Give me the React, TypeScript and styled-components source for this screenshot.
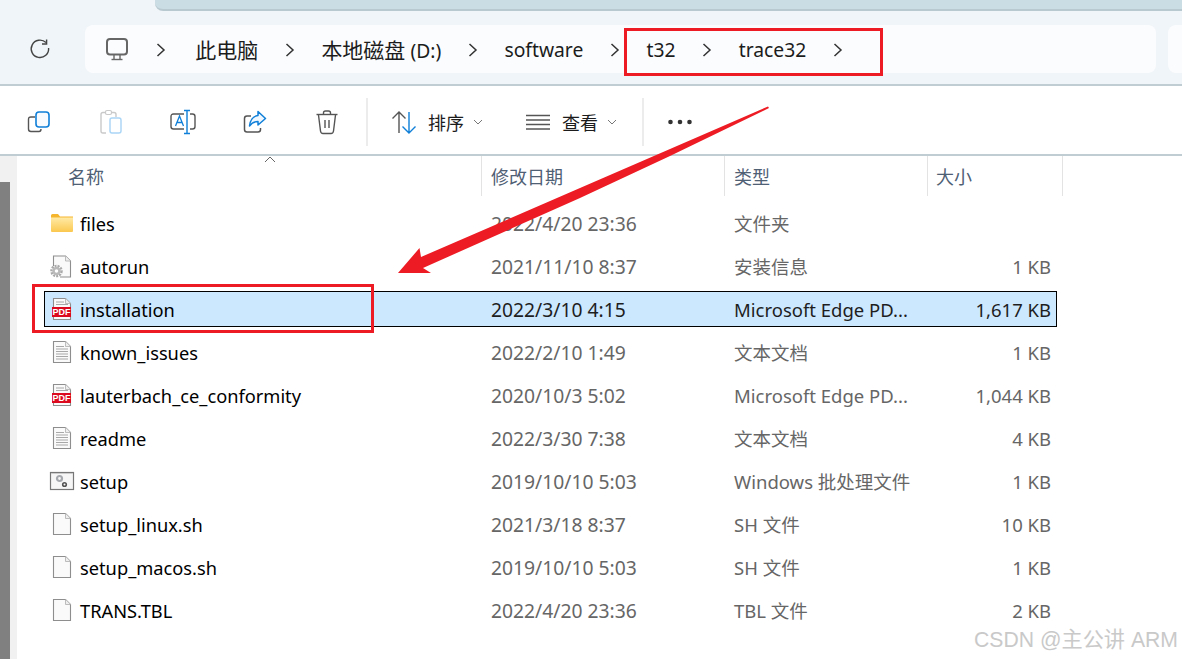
import * as React from 'react';
import styled, { createGlobalStyle } from 'styled-components';

const GlobalStyle = createGlobalStyle`
  html, body {
    margin: 0;
    padding: 0;
    background: #fff;
  }
  body {
    font-family: 'Noto Sans', 'Noto Sans CJK SC', sans-serif;
    overflow: hidden;
  }
`;

const Page = styled.div`
  position: relative;
  width: 1182px;
  height: 659px;
  overflow: hidden;
  display: flex;
  flex-direction: column;
  background: #fff;
`;

const TabStrip = styled.div`
  height: 11px;
  flex: none;
  padding-left: 155px;
  background: #eff5f8;
`;

const ActiveTab = styled.div`
  height: 9px;
  background: #cbdde4;
  border-bottom: 2px solid #b9c9d0;
  border-bottom-left-radius: 8px;
`;

const AddressRow = styled.div`
  height: 75px;
  flex: none;
  box-sizing: border-box;
  display: flex;
  align-items: flex-start;
  padding-top: 14px;
  background: #eff5f8;
  border-bottom: 2px solid #c0ced4;
`;

const RefreshSlot = styled.div`
  width: 85px;
  height: 48px;
  flex: none;
  display: flex;
  align-items: center;
  justify-content: center;
  padding-right: 5px;
  box-sizing: border-box;
`;

const AddressBar = styled.div`
  width: 1071px;
  height: 48px;
  flex: none;
  box-sizing: border-box;
  display: flex;
  align-items: center;
  gap: 25.6px;
  padding-left: 20px;
  background: #fbfcfe;
  border-radius: 8px;
`;

const SearchBox = styled.div`
  width: 40px;
  height: 48px;
  flex: none;
  margin-left: 12px;
  background: #fbfcfe;
  border-radius: 8px 0 0 8px;
`;

const Crumb = styled.span`
  font-size: 19.3px;
  color: #1c1c1c;
  white-space: nowrap;
  line-height: 26px;
  margin-top: 2px;
`;

const CrumbCjk = styled.span`
  font-family: 'Noto Sans CJK SC', sans-serif;
  font-size: 21px;
`;

const ChevronSvg = styled.svg<{ $after?: number }>`
  flex: none;
  margin-top: 2px;
  margin-right: ${(p) => p.$after ?? 0}px;
`;

const Toolbar = styled.div`
  height: 70px;
  flex: none;
  box-sizing: border-box;
  display: flex;
  align-items: center;
  padding: 4px 0 0 3px;
  border-bottom: 2px solid #c0ced4;
`;

const ToolButton = styled.div`
  width: 72px;
  height: 48px;
  flex: none;
  display: flex;
  align-items: center;
  justify-content: center;
`;

const ToolDivider = styled.div`
  width: 2px;
  height: 48px;
  flex: none;
  margin: 0 23px 0 3px;
  background: #ececec;
`;

const MenuButton = styled.div<{ $width: number }>`
  width: ${(p) => p.$width}px;
  height: 48px;
  flex: none;
  display: flex;
  align-items: center;
`;

const MenuLabel = styled.span`
  margin: 0 9px 0 11px;
  font-size: 18px;
  color: #1c1c1c;
  font-family: 'Noto Sans CJK SC', sans-serif;
`;

const Body = styled.div`
  flex: 1;
  display: flex;
  min-height: 0;
`;

const ScrollTrack = styled.div`
  width: 17px;
  flex: none;
  background: #f1f1f1;
  margin-right: 3px;
`;

const ScrollThumb = styled.div`
  width: 10px;
  height: 100%;
  margin-top: 26px;
  background: #808080;
`;

const List = styled.div`
  flex: 1;
  min-width: 0;
`;

const HeaderRow = styled.div`
  height: 40px;
  display: grid;
  grid-template-columns: 462px 243px 203px 135px;
`;

const HeaderCell = styled.div<{ $pad: number }>`
  position: relative;
  box-sizing: border-box;
  padding-left: ${(p) => p.$pad}px;
  display: flex;
  align-items: center;
  font-family: 'Noto Sans CJK SC', sans-serif;
  font-size: 18px;
  color: #4f6075;
  border-right: 1.5px solid #e3e3e3;
`;

const SortCaret = styled.svg`
  position: absolute;
  left: 244px;
  top: 0;
`;

const Rows = styled.div`
  display: flex;
  flex-direction: column;
  gap: 7px;
  margin-left: 24px;
  padding-top: 9px;
  width: 1013px;
`;

const Row = styled.div<{ $selected?: boolean }>`
  height: 36px;
  box-sizing: border-box;
  display: grid;
  grid-template-columns: 35px 411px 243px 1fr auto;
  align-items: center;
  padding-right: 5px;
  border: 1px solid ${(p) => (p.$selected ? '#000' : 'transparent')};
  background: ${(p) => (p.$selected ? '#cce8ff' : 'transparent')};
`;

const IconSlot = styled.div`
  display: flex;
  align-items: center;
  justify-content: center;
  padding-right: 2px;
  box-sizing: border-box;
`;

const NameCell = styled.span`
  font-size: 18.25px;
  color: #000;
  white-space: nowrap;
`;

const DetailCell = styled.span<{ $selected?: boolean; $right?: boolean }>`
  font-size: 18.5px;
  color: ${(p) => (p.$selected ? '#1e1e1e' : '#666')};
  white-space: nowrap;
  text-align: ${(p) => (p.$right ? 'right' : 'left')};
`;

const DateCell = styled(DetailCell)`
  font-size: 19.3px;
`;

const Annotations = styled.svg`
  position: absolute;
  left: 0;
  top: 0;
  pointer-events: none;
`;

const Watermark = styled.div`
  position: absolute;
  right: 4px;
  bottom: 6px;
  font-family: 'Liberation Sans', 'Noto Sans CJK SC', sans-serif;
  font-size: 21.2px;
  color: #c9c9c9;
  white-space: nowrap;
`;

const Chevron = ({ after }: { after?: number }) => (
  <ChevronSvg $after={after} width="12" height="16" viewBox="0 0 12 16" fill="none">
    <path d="M2.500 2 L9 8 L2.500 14" stroke="#333" strokeWidth="1.500" />
  </ChevronSvg>
);

const SmallChevron = () => (
  <svg width="10" height="6" viewBox="0 0 10 6" fill="none">
    <path d="M1 1 L5 5 L9 1" stroke="#777" strokeWidth="1" />
  </svg>
);

const RefreshIcon = () => (
  <svg width="22" height="22" viewBox="0 0 22 22" fill="none" stroke="#444" strokeWidth="1.400">
    <path d="M17 4.600 A8.700 8.700 0 1 0 19.600 10" />
    <path d="M17.600 1.600 V6 H13" />
  </svg>
);

const ComputerIcon = () => (
  <svg width="24" height="24" viewBox="0 0 24 24" fill="none" stroke="#666" strokeWidth="2">
    <rect x="2" y="2" width="20" height="15.500" rx="3" />
    <path d="M9 18 V22 M15 18 V22" strokeWidth="1.400" />
    <path d="M6.500 22.500 H17.500" strokeWidth="1.400" />
  </svg>
);

const CopyIcon = () => (
  <svg width="26" height="26" viewBox="0 0 26 26" fill="none">
    <path d="M9 8 H5 Q2.500 8 2.500 10.500 V20 Q2.500 22.500 5 22.500 H13 Q15 22.500 15 20" stroke="#555" strokeWidth="1.400" />
    <rect x="10" y="3" width="13" height="15" rx="3" stroke="#0f7fd8" strokeWidth="1.600" fill="#f8fbff" />
  </svg>
);

const PasteIcon = () => (
  <svg width="26" height="26" viewBox="0 0 26 26" fill="none">
    <path d="M8 24 H5 Q3 24 3 22 V5.500 Q3 3.500 5 3.500 H16 Q18 3.500 18 5.500 V8" stroke="#c9c9c9" strokeWidth="1.400" />
    <rect x="7.500" y="1.500" width="6" height="4" rx="1.500" stroke="#c9c9c9" strokeWidth="1.200" fill="#fff" />
    <rect x="12" y="9" width="11" height="15" rx="2" stroke="#a9d5f5" strokeWidth="1.400" />
  </svg>
);

const RenameIcon = () => (
  <svg width="26" height="26" viewBox="0 0 26 26" fill="none">
    <path d="M14 5 H3.500 Q1 5 1 7.500 V17.500 Q1 20 3.500 20 H14" stroke="#555" strokeWidth="1.400" />
    <path d="M20 5 H22.500 Q25 5 25 7.500 V17.500 Q25 20 22.500 20 H20" stroke="#555" strokeWidth="1.400" />
    <path d="M5.500 17 L9.500 7 L13.500 17 M7 13.500 H12" stroke="#0f7fd8" strokeWidth="1.300" />
    <path d="M17 1 V25 M14 1.500 H20 M14 24.500 H20" stroke="#0f7fd8" strokeWidth="1.400" />
  </svg>
);

const ShareIcon = () => (
  <svg width="26" height="26" viewBox="0 0 26 26" fill="none">
    <path d="M9 7 H5 Q2.500 7 2.500 9.500 V20.500 Q2.500 23 5 23 H16 Q18.500 23 18.500 20.500 V19" stroke="#555" strokeWidth="1.500" />
    <path d="M16 2.500 L23.500 9.500 L16 16 V12.500 C12 12.500 9.500 14 7.500 17 C8 11.500 11 7 16 6.500 Z" stroke="#0f7fd8" strokeWidth="1.500" strokeLinejoin="round" fill="#eef7ff" />
  </svg>
);

const TrashIcon = () => (
  <svg width="26" height="26" viewBox="0 0 26 26" fill="none" stroke="#555" strokeWidth="1.400">
    <path d="M2.500 5.500 H23.500" />
    <path d="M9.500 5 V4 Q9.500 2 11.500 2 H14.500 Q16.500 2 16.500 4 V5" />
    <path d="M4.500 6 L6.500 22 Q6.800 24.500 9 24.500 H17 Q19.200 24.500 19.500 22 L21.500 6" />
    <path d="M11 11 V19 M15 11 V19" />
  </svg>
);

const SortIcon = () => (
  <svg width="26" height="26" viewBox="0 0 26 26" fill="none" strokeWidth="1.400">
    <path d="M8 24 V3 M1.500 9.500 L8 3 L14.500 9.500" stroke="#555" />
    <path d="M18 3 V24 M11.500 17.500 L18 24 L24.500 17.500" stroke="#0f7fd8" />
  </svg>
);

const ViewIcon = () => (
  <svg width="26" height="26" viewBox="0 0 26 26" fill="none" stroke="#555" strokeWidth="1.300">
    <path d="M1 6.500 H25 M1 11 H25 M1 15.500 H25 M1 20 H25" />
  </svg>
);

const MoreIcon = () => (
  <svg width="26" height="6" viewBox="0 0 26 6" fill="#333">
    <circle cx="3.500" cy="3" r="2.300" />
    <circle cx="13" cy="3" r="2.300" />
    <circle cx="22.500" cy="3" r="2.300" />
  </svg>
);

const FolderIcon = () => (
  <svg width="24" height="24" viewBox="0 0 24 24">
    <defs>
      <linearGradient id="folderFill" x1="0" y1="0" x2="0" y2="1">
        <stop offset="0" stopColor="#ffeaa6" />
        <stop offset="1" stopColor="#fbc84f" />
      </linearGradient>
    </defs>
    <path d="M1 4.500 Q1 3 2.500 3 H8 L10 5.500 H23 V8 H1 Z" fill="#f5b62e" />
    <path d="M1 6.500 H23 V20 Q23 21 22 21 H2 Q1 21 1 20 Z" fill="url(#folderFill)" />
  </svg>
);

const DocBase = ({ children, fill = '#fafafa' }: { children?: React.ReactNode; fill?: string }) => (
  <svg width="24" height="26" viewBox="0 0 24 26" fill="none">
    <path d="M3.500 2.500 H15.500 L20.500 7.500 V23.500 H3.500 Z" fill={fill} stroke="#8e8e8e" strokeWidth="1.100" />
    <path d="M15.500 2.500 V7.500 H20.500" fill="#eee" stroke="#b5b5b5" strokeWidth="0.900" />
    {children}
  </svg>
);

const TextDocIcon = () => (
  <DocBase>
    <path d="M6 7.500 H14 M6 10 H18 M6 12.500 H18 M6 15 H18 M6 17.500 H18 M6 20 H18" stroke="#a8a8a8" strokeWidth="1" />
  </DocBase>
);

const PdfIcon = () => (
  <DocBase>
    <path d="M6 6 H14 M6 8.500 H18" stroke="#a8a8a8" strokeWidth="1" />
    <rect x="2" y="11" width="19" height="10" fill="#dc0a1e" />
    <text x="11.500" y="19.300" textAnchor="middle" fill="#fff" fontSize="9" fontWeight="700" fontFamily="'Liberation Sans', sans-serif">
      PDF
    </text>
  </DocBase>
);

const GearDocIcon = () => (
  <svg width="24" height="26" viewBox="0 0 24 26" fill="none">
    <path d="M3.500 13 V3 H15.500 L20.500 8 V24 H10" fill="#fafafa" stroke="#8e8e8e" strokeWidth="1.100" />
    <path d="M15.500 3 V8 H20.500" fill="#eee" stroke="#b5b5b5" strokeWidth="0.900" />
    <circle cx="6.500" cy="18" r="5.500" fill="#fff" />
    <circle cx="6.500" cy="18" r="5" fill="none" stroke="#a9a9a9" strokeWidth="2.500" strokeDasharray="2 1" />
    <circle cx="6.500" cy="18" r="3" fill="none" stroke="#b9b9b9" strokeWidth="2.500" />
  </svg>
);

const SetupIcon = () => (
  <svg width="26" height="22" viewBox="0 0 26 22" fill="none">
    <rect x="1.500" y="2.500" width="23" height="17" fill="#f6f6f6" stroke="#777" strokeWidth="1.200" />
    <path d="M2 3.500 H24" stroke="#ccc" strokeWidth="1" />
    <circle cx="10.500" cy="8.500" r="2.500" stroke="#a5a8ad" strokeWidth="2.200" />
    <circle cx="15.500" cy="14.500" r="1.800" stroke="#555" strokeWidth="1.600" />
  </svg>
);

type FileKind = 'folder' | 'gear' | 'pdf' | 'text' | 'setup' | 'blank';

const iconFor: Record<FileKind, React.ReactNode> = {
  folder: <FolderIcon />,
  gear: <GearDocIcon />,
  pdf: <PdfIcon />,
  text: <TextDocIcon />,
  setup: <SetupIcon />,
  blank: <DocBase />,
};

type FileEntry = {
  name: string;
  date: string;
  type: string;
  size: string;
  kind: FileKind;
  selected?: boolean;
};

const files: FileEntry[] = [
  { name: 'files', date: '2022/4/20 23:36', type: '文件夹', size: '', kind: 'folder' },
  { name: 'autorun', date: '2021/11/10 8:37', type: '安装信息', size: '1 KB', kind: 'gear' },
  { name: 'installation', date: '2022/3/10 4:15', type: 'Microsoft Edge PD...', size: '1,617 KB', kind: 'pdf', selected: true },
  { name: 'known_issues', date: '2022/2/10 1:49', type: '文本文档', size: '1 KB', kind: 'text' },
  { name: 'lauterbach_ce_conformity', date: '2020/10/3 5:02', type: 'Microsoft Edge PD...', size: '1,044 KB', kind: 'pdf' },
  { name: 'readme', date: '2022/3/30 7:38', type: '文本文档', size: '4 KB', kind: 'text' },
  { name: 'setup', date: '2019/10/10 5:03', type: 'Windows 批处理文件', size: '1 KB', kind: 'setup' },
  { name: 'setup_linux.sh', date: '2021/3/18 8:37', type: 'SH 文件', size: '10 KB', kind: 'blank' },
  { name: 'setup_macos.sh', date: '2019/10/10 5:03', type: 'SH 文件', size: '1 KB', kind: 'blank' },
  { name: 'TRANS.TBL', date: '2022/4/20 23:36', type: 'TBL 文件', size: '2 KB', kind: 'blank' },
];

const crumbs: React.ReactNode[] = [
  <CrumbCjk key="pc">此电脑</CrumbCjk>,
  <React.Fragment key="disk"><CrumbCjk>本地磁盘</CrumbCjk> (D:)</React.Fragment>,
  'software',
  't32',
  'trace32',
];

const App = () => (
  <Page>
    <GlobalStyle />
    <TabStrip>
      <ActiveTab />
    </TabStrip>
    <AddressRow>
      <RefreshSlot>
        <RefreshIcon />
      </RefreshSlot>
      <AddressBar>
        <ComputerIcon />
        <Chevron after={3} />
        {crumbs.map((crumb, index) => (
          <React.Fragment key={index}>
            <Crumb>{crumb}</Crumb>
            <Chevron />
          </React.Fragment>
        ))}
      </AddressBar>
      <SearchBox />
    </AddressRow>
    <Toolbar>
      <ToolButton><CopyIcon /></ToolButton>
      <ToolButton><PasteIcon /></ToolButton>
      <ToolButton><RenameIcon /></ToolButton>
      <ToolButton><ShareIcon /></ToolButton>
      <ToolButton><TrashIcon /></ToolButton>
      <ToolDivider />
      <MenuButton $width={134}>
        <SortIcon />
        <MenuLabel>排序</MenuLabel>
        <SmallChevron />
      </MenuButton>
      <MenuButton $width={114}>
        <ViewIcon />
        <MenuLabel>查看</MenuLabel>
        <SmallChevron />
      </MenuButton>
      <ToolDivider />
      <MoreIcon />
    </Toolbar>
    <Body>
      <ScrollTrack>
        <ScrollThumb />
      </ScrollTrack>
      <List>
        <HeaderRow>
          <HeaderCell $pad={48}>
            名称
            <SortCaret width="12" height="7" viewBox="0 0 12 7" fill="none">
              <path d="M1 6 L6 1 L11 6" stroke="#666" strokeWidth="1" />
            </SortCaret>
          </HeaderCell>
          <HeaderCell $pad={9}>修改日期</HeaderCell>
          <HeaderCell $pad={9}>类型</HeaderCell>
          <HeaderCell $pad={8}>大小</HeaderCell>
        </HeaderRow>
        <Rows>
          {files.map((file) => (
            <Row key={file.name} $selected={file.selected}>
              <IconSlot>{iconFor[file.kind]}</IconSlot>
              <NameCell>{file.name}</NameCell>
              <DateCell $selected={file.selected}>{file.date}</DateCell>
              <DetailCell $selected={file.selected}>{file.type}</DetailCell>
              <DetailCell $selected={file.selected} $right>{file.size}</DetailCell>
            </Row>
          ))}
        </Rows>
      </List>
    </Body>
    <Annotations width="1182" height="659" viewBox="0 0 1182 659" fill="none">
      <rect x="625.500" y="29.500" width="256" height="45" stroke="#ed1c24" strokeWidth="3" />
      <rect x="33.500" y="285.500" width="339" height="46" stroke="#ed1c24" strokeWidth="3" />
      <path d="M768 106.500 L769 108 L670 156 L580 198 L423 268 L431 273 L398 273 L419.500 248 L421 257 L580 188 L670 149 Z" fill="#ed1c24" />
    </Annotations>
    <Watermark>CSDN @主公讲 ARM</Watermark>
  </Page>
);

export default App;
